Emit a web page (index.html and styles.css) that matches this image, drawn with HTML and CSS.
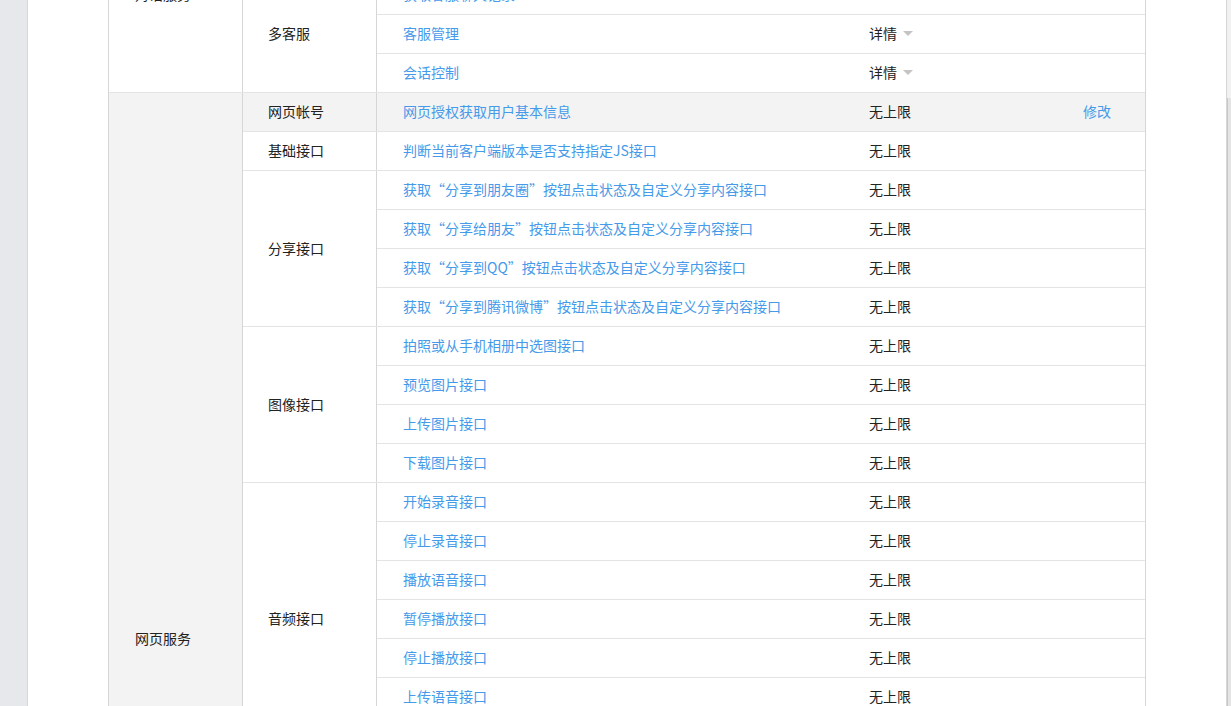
FILE: index.html
```html
<!DOCTYPE html>
<html lang="zh-CN">
<head>
<meta charset="utf-8">
<title>接口权限</title>
<link rel="stylesheet" href="styles.css">
</head>
<body>
<div class="page">
  <div class="side"></div>
  <div class="panel">
    <div class="table">
      <div class="section">
        <div class="cat">对话服务</div>
        <div class="groups">
          <div class="group">
            <div class="sub">智能接口</div>
            <div class="rows">
              <div class="row"><span class="name">语义理解接口</span><span class="val">无上限</span><span class="op"></span></div>
              <div class="row"><span class="name">获取客服基本信息</span><span class="val">无上限</span><span class="op"></span></div>
            </div>
          </div>
          <div class="group">
            <div class="sub">多客服</div>
            <div class="rows">
              <div class="row"><span class="name">获取客服聊天记录</span><span class="val"></span><span class="op"></span></div>
              <div class="row"><span class="name">客服管理</span><span class="val">详情<i class="caret"></i></span><span class="op"></span></div>
              <div class="row"><span class="name">会话控制</span><span class="val">详情<i class="caret"></i></span><span class="op"></span></div>
            </div>
          </div>
        </div>
      </div>
      <div class="section shade">
        <div class="cat">网页服务</div>
        <div class="groups">
          <div class="group hl">
            <div class="sub">网页帐号</div>
            <div class="rows">
              <div class="row"><span class="name">网页授权获取用户基本信息</span><span class="val">无上限</span><span class="op"><a class="link">修改</a></span></div>
            </div>
          </div>
          <div class="group">
            <div class="sub">基础接口</div>
            <div class="rows">
              <div class="row"><span class="name">判断当前客户端版本是否支持指定JS接口</span><span class="val">无上限</span><span class="op"></span></div>
            </div>
          </div>
          <div class="group">
            <div class="sub">分享接口</div>
            <div class="rows">
              <div class="row"><span class="name">获取“分享到朋友圈”按钮点击状态及自定义分享内容接口</span><span class="val">无上限</span><span class="op"></span></div>
              <div class="row"><span class="name">获取“分享给朋友”按钮点击状态及自定义分享内容接口</span><span class="val">无上限</span><span class="op"></span></div>
              <div class="row"><span class="name">获取“分享到QQ”按钮点击状态及自定义分享内容接口</span><span class="val">无上限</span><span class="op"></span></div>
              <div class="row"><span class="name">获取“分享到腾讯微博”按钮点击状态及自定义分享内容接口</span><span class="val">无上限</span><span class="op"></span></div>
            </div>
          </div>
          <div class="group">
            <div class="sub">图像接口</div>
            <div class="rows">
              <div class="row"><span class="name">拍照或从手机相册中选图接口</span><span class="val">无上限</span><span class="op"></span></div>
              <div class="row"><span class="name">预览图片接口</span><span class="val">无上限</span><span class="op"></span></div>
              <div class="row"><span class="name">上传图片接口</span><span class="val">无上限</span><span class="op"></span></div>
              <div class="row"><span class="name">下载图片接口</span><span class="val">无上限</span><span class="op"></span></div>
            </div>
          </div>
          <div class="group">
            <div class="sub">音频接口</div>
            <div class="rows">
              <div class="row"><span class="name">开始录音接口</span><span class="val">无上限</span><span class="op"></span></div>
              <div class="row"><span class="name">停止录音接口</span><span class="val">无上限</span><span class="op"></span></div>
              <div class="row"><span class="name">播放语音接口</span><span class="val">无上限</span><span class="op"></span></div>
              <div class="row"><span class="name">暂停播放接口</span><span class="val">无上限</span><span class="op"></span></div>
              <div class="row"><span class="name">停止播放接口</span><span class="val">无上限</span><span class="op"></span></div>
              <div class="row"><span class="name">上传语音接口</span><span class="val">无上限</span><span class="op"></span></div>
              <div class="row"><span class="name">下载语音接口</span><span class="val">无上限</span><span class="op"></span></div>
            </div>
          </div>
          <div class="group">
            <div class="sub">智能接口</div>
            <div class="rows">
              <div class="row"><span class="name">识别音频并返回识别结果接口</span><span class="val">无上限</span><span class="op"></span></div>
            </div>
          </div>
          <div class="group">
            <div class="sub">设备信息</div>
            <div class="rows">
              <div class="row"><span class="name">获取网络状态接口</span><span class="val">无上限</span><span class="op"></span></div>
            </div>
          </div>
          <div class="group">
            <div class="sub">地理位置</div>
            <div class="rows">
              <div class="row"><span class="name">使用微信内置地图查看位置接口</span><span class="val">无上限</span><span class="op"></span></div>
              <div class="row"><span class="name">获取地理位置接口</span><span class="val">无上限</span><span class="op"></span></div>
            </div>
          </div>
          <div class="group">
            <div class="sub">界面操作</div>
            <div class="rows">
              <div class="row"><span class="name">隐藏右上角菜单接口</span><span class="val">无上限</span><span class="op"></span></div>
              <div class="row"><span class="name">显示右上角菜单接口</span><span class="val">无上限</span><span class="op"></span></div>
              <div class="row"><span class="name">关闭当前网页窗口接口</span><span class="val">无上限</span><span class="op"></span></div>
              <div class="row"><span class="name">批量隐藏功能按钮接口</span><span class="val">无上限</span><span class="op"></span></div>
              <div class="row"><span class="name">批量显示功能按钮接口</span><span class="val">无上限</span><span class="op"></span></div>
              <div class="row"><span class="name">隐藏所有非基础按钮接口</span><span class="val">无上限</span><span class="op"></span></div>
              <div class="row"><span class="name">显示所有功能按钮接口</span><span class="val">无上限</span><span class="op"></span></div>
            </div>
          </div>
        </div>
      </div>
    </div>
  </div>
  <div class="rail"><div class="thumb"></div></div>
</div>
</body>
</html>
```

FILE: styles.css
```css
html, body {
  margin: 0;
  padding: 0;
  height: 100%;
  overflow: hidden;
}
body {
  background: #e7e8eb;
  font-family: "Noto Sans CJK SC", "Microsoft YaHei", sans-serif;
  font-size: 14px;
  color: #222;
}
.page {
  display: flex;
  height: 706px;
  overflow: hidden;
}
.side {
  width: 27px;
  flex: none;
  background: #e7e8eb;
}
.panel {
  width: 1200px;
  flex: none;
  box-sizing: border-box;
  background: #fff;
  border-left: 1px solid #d6d7da;
  border-right: 1px solid #d6d6d6;
}
.rail {
  flex: 1;
  background: #f1f1f1;
  display: flex;
  flex-direction: column;
}
.thumb {
  margin-top: 98px;
  flex: 1;
  border-left: 1px solid #c8c8c8;
  background: #e4e4e4;
}
.table {
  box-sizing: border-box;
  width: 1038px;
  margin-left: 80px;
  margin-top: -103px;
  border: 1px solid #d6d6d6;
  border-bottom: none;
}
.section {
  display: flex;
  border-bottom: 1px solid #e4e4e4;
}
.cat {
  box-sizing: border-box;
  width: 134px;
  flex: none;
  border-right: 1px solid #d6d6d6;
  padding: 0 0 2px 26px;
  display: flex;
  align-items: center;
}
.shade .cat {
  background: #f3f3f3;
}
.groups {
  flex: 1;
  display: flex;
  flex-direction: column;
}
.group {
  display: flex;
  border-bottom: 1px solid #e4e4e4;
}
.group:last-child {
  border-bottom: none;
}
.group.hl {
  background: #f3f3f3;
}
.sub {
  box-sizing: border-box;
  width: 134px;
  flex: none;
  border-right: 1px solid #d6d6d6;
  padding: 0 0 2px 25px;
  display: flex;
  align-items: center;
}
.rows {
  flex: 1;
  display: flex;
  flex-direction: column;
}
.row {
  display: flex;
  align-items: center;
  height: 36px;
  padding-bottom: 2px;
  border-bottom: 1px solid #e4e4e4;
}
.row:last-child {
  border-bottom: none;
}
.name {
  box-sizing: border-box;
  width: 492px;
  flex: none;
  padding-left: 26px;
  color: #459ae9;
  white-space: nowrap;
}
.val {
  width: 214px;
  flex: none;
  display: flex;
  align-items: center;
}
.op {
  flex: 1;
}
.link {
  color: #459ae9;
}
.caret {
  display: inline-block;
  width: 0;
  height: 0;
  margin-left: 6px;
  border-top: 5px solid #c4c4c4;
  border-left: 5px solid transparent;
  border-right: 5px solid transparent;
}
```
